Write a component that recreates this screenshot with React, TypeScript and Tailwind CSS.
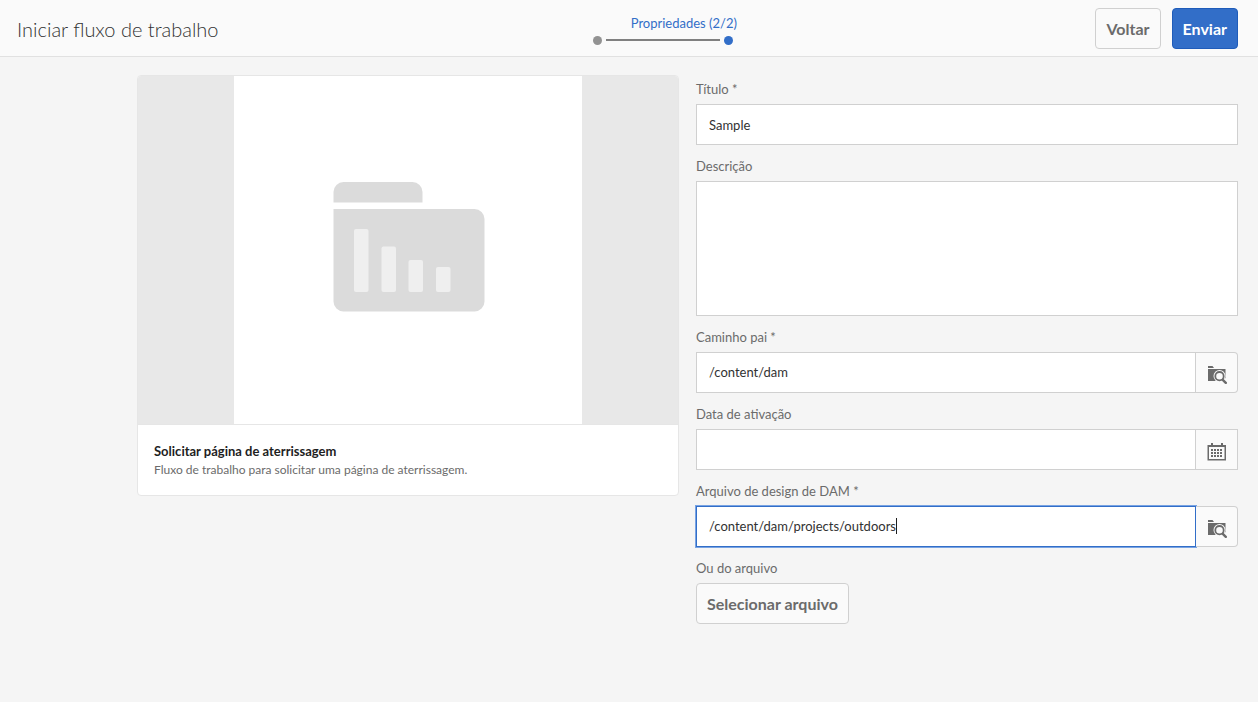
import { ReactNode, useState } from "react";

const fieldClass =
  "block w-full min-w-0 border border-[#d0d0d0] bg-white px-3 text-[13px] text-[#323232] outline-none";

const buttonClass =
  "h-[41px] rounded border px-[10px] pt-px text-base font-bold whitespace-nowrap";

function FolderSearchIcon() {
  return (
    <svg width="20" height="20" viewBox="0 0 20 20" aria-hidden="true">
      <path d="M1 1h4.500l1.500 2H1z" fill="#6b6b6b" />
      <path d="M1 4h17.500v12H1z" fill="#6b6b6b" />
      <circle cx="12.500" cy="11" r="6" fill="#fafafa" />
      <path d="M15 14l4.500-1V20H11v-3z" fill="#fafafa" />
      <circle cx="12.500" cy="11.200" r="4.200" fill="#fafafa" stroke="#6b6b6b" strokeWidth="1.800" />
      <path d="M15.800 14.800l3 3" stroke="#6b6b6b" strokeWidth="2.400" strokeLinecap="round" />
    </svg>
  );
}

function CalendarIcon() {
  const xs = [4, 7, 10, 13];
  const ys = [7, 10, 13];
  return (
    <svg width="20" height="20" viewBox="0 0 20 20" aria-hidden="true">
      <path d="M0.500 3h18.500v15.500H0.500zM2 5v12h15.500V5z" fill="#6b6b6b" fillRule="evenodd" />
      <path d="M4 1h2v4H4zM14 1h2v4h-2z" fill="#6b6b6b" />
      {ys.map((y) => xs.map((x) => <rect key={`${x}-${y}`} x={x} y={y} width="2" height="2" fill="#6b6b6b" />))}
    </svg>
  );
}

function Field({ id, label, children }: { id: string; label: string; children: ReactNode }) {
  return (
    <div>
      <label htmlFor={id} className="mb-[3px] block text-[13px] leading-6 text-[#6b6b6b]">
        {label}
      </label>
      {children}
    </div>
  );
}

function Thumbnail() {
  return (
    <svg className="size-[348px] bg-white" viewBox="0 1 348 348" aria-hidden="true">
      <path d="M99.500 127.500V117a10 10 0 0 1 10-10h69a10 10 0 0 1 10 10v10.500z" fill="#dbdbdb" />
      <path d="M99.500 134h141a10 10 0 0 1 10 10v82.500a10 10 0 0 1-10 10h-131a10 10 0 0 1-10-10z" fill="#dbdbdb" />
      <g fill="#efefef">
        <rect x="120" y="154" width="14.500" height="63" rx="2" />
        <rect x="147.500" y="171.500" width="14.500" height="45.500" rx="2" />
        <rect x="174.500" y="185" width="14.500" height="32" rx="2" />
        <rect x="202" y="192" width="14.500" height="25" rx="2" />
      </g>
    </svg>
  );
}

export default function App() {
  const [title, setTitle] = useState("Sample");
  const [parent, setParent] = useState("/content/dam");
  const [design, setDesign] = useState("/content/dam/projects/outdoors");

  return (
    <div className="min-h-screen bg-[#f5f5f5] font-['Lato','Open_Sans',sans-serif] text-[#6b6b6b]">
      <header className="flex h-[57px] items-center justify-between border-b border-[#e1e1e1] bg-[#fafafa] pt-px pr-5 pl-[17px]">
        <h1 className="text-xl font-light text-[#323232]">Iniciar fluxo de trabalho</h1>
        <div className="ml-3 flex flex-col items-end">
          <span className="-mr-1 text-[13px] leading-5 text-[#326ec8]">Propriedades (2/2)</span>
          <div className="mt-[3px] flex items-center gap-1">
            <span className="size-[9px] rounded-full bg-[#929292]" />
            <span className="h-[2px] w-[114px] bg-[#808080]" />
            <span className="size-[9px] rounded-full bg-[#326ec8]" />
          </div>
        </div>
        <div className="flex gap-[11px]">
          <button type="button" className={`${buttonClass} border-[#d0d0d0] bg-[#fafafa]`}>
            Voltar
          </button>
          <button type="button" className={`${buttonClass} border-[#1f5cba] bg-[#326ec8] text-white`}>
            Enviar
          </button>
        </div>
      </header>

      <main className="grid grid-cols-2 items-start gap-[17px] pt-[18px] pr-5 pb-6 pl-[137px]">
        <article className="overflow-hidden rounded border border-[#e6e6e6] bg-white">
          <div className="flex justify-center border-b border-[#e6e6e6] bg-[#e8e8e8]">
            <Thumbnail />
          </div>
          <div className="p-4">
            <h2 className="text-[13px] leading-5 font-bold text-[#1e1e1e]">Solicitar página de aterrissagem</h2>
            <p className="text-xs leading-[18px]">Fluxo de trabalho para solicitar uma página de aterrissagem.</p>
          </div>
        </article>

        <form className="flex flex-col gap-[9px] pt-[2px]" onSubmit={(e) => e.preventDefault()}>
          <Field id="title" label="Título *">
            <input id="title" className={`${fieldClass} h-[41px]`} value={title} onChange={(e) => setTitle(e.target.value)} />
          </Field>
          <Field id="description" label="Descrição">
            <textarea id="description" className={`${fieldClass} h-[135px] resize-none py-2`} />
          </Field>
          <Field id="parent" label="Caminho pai *">
            <div className="flex h-[41px]">
              <input id="parent" className={`${fieldClass} flex-1`} value={parent} onChange={(e) => setParent(e.target.value)} />
              <button type="button" aria-label="Procurar" className="flex w-[42px] items-center justify-center rounded-r border border-l-0 border-[#d0d0d0] bg-[#fafafa] pt-1">
                <FolderSearchIcon />
              </button>
            </div>
          </Field>
          <Field id="date" label="Data de ativação">
            <div className="flex h-[41px]">
              <input id="date" className={`${fieldClass} flex-1`} />
              <button type="button" aria-label="Calendário" className="flex w-[42px] items-center justify-center border border-l-0 border-[#d0d0d0] bg-[#fafafa] pt-1">
                <CalendarIcon />
              </button>
            </div>
          </Field>
          <Field id="design" label="Arquivo de design de DAM *">
            <div className="relative flex h-[41px]">
              <input
                id="design"
                autoFocus
                className="block w-full min-w-0 flex-1 border border-[#326ec8] bg-white px-3 text-[13px] text-[#323232] caret-transparent shadow-[0_0_0_1px_#78a3e3] outline-none"
                value={design}
                onChange={(e) => setDesign(e.target.value)}
              />
              <span className="absolute top-3 left-[200px] h-4 w-px bg-[#1e1e1e]" />
              <button type="button" aria-label="Procurar" className="flex w-[42px] items-center justify-center rounded-r border border-l-0 border-[#d0d0d0] bg-[#fafafa] pt-1">
                <FolderSearchIcon />
              </button>
            </div>
          </Field>
          <Field id="file" label="Ou do arquivo">
            <button id="file" type="button" className={`${buttonClass} border-[#d0d0d0] bg-[#fafafa]`}>
              Selecionar arquivo
            </button>
          </Field>
        </form>
      </main>
    </div>
  );
}
